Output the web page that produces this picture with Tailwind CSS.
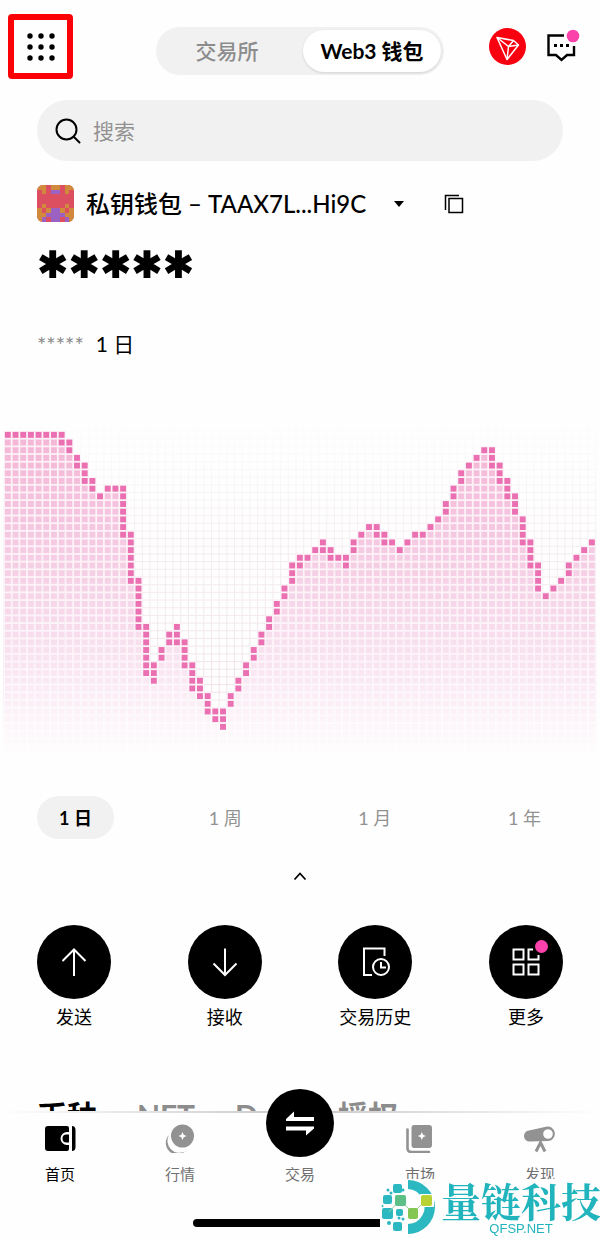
<!DOCTYPE html>
<html lang="zh-CN">
<head>
    <meta charset="UTF-8">
    <meta name="viewport" content="width=device-width, initial-scale=1.0">
    <title>Web3 钱包</title>
    <script src="https://cdn.jsdelivr.net/npm/@tailwindcss/browser@4"></script>
</head>
<body class="bg-[#fefefe] text-black font-['Lato','Noto_Sans_CJK_SC',sans-serif]">

    <div class="min-h-screen pb-24">

        <!-- Top bar -->
        <header class="grid grid-cols-[1fr_288px_1fr] items-center pt-[14px]">
            <div class="pl-2">
                <button aria-label="菜单" class="flex size-[65px] items-center justify-center rounded-sm border-6 border-[#fb0007]">
                    <svg class="size-8" viewBox="0 0 32 32" fill="black">
                        <circle cx="5" cy="5" r="2.7"/><circle cx="16" cy="5" r="2.7"/><circle cx="27" cy="5" r="2.7"/>
                        <circle cx="5" cy="16" r="2.7"/><circle cx="16" cy="16" r="2.7"/><circle cx="27" cy="16" r="2.7"/>
                        <circle cx="5" cy="27" r="2.7"/><circle cx="16" cy="27" r="2.7"/><circle cx="27" cy="27" r="2.7"/>
                    </svg>
                </button>
            </div>
            <div class="mb-1 flex h-12 self-end rounded-full bg-[#f1f1f1] p-[3px]">
                <button class="flex-1 pr-2 text-[21px] font-medium text-[#8c8c8c]">交易所</button>
                <button class="w-[138px] rounded-full bg-white text-[21px] font-bold shadow">Web3 钱包</button>
            </div>
            <div class="flex items-center justify-end gap-5 pr-5">
                <button aria-label="TRON">
                    <svg class="size-[37px]" viewBox="0 0 37 37" fill="none" stroke="white" stroke-width="1.5" stroke-linejoin="round">
                        <circle cx="18.5" cy="18.5" r="18.5" fill="#f8000f" stroke="none"/>
                        <path d="M8 9.500 24.500 12.500 29.500 17 18 31.500Z"/>
                        <path d="M8 9.500 19.500 18.500 24.500 12.500M19.500 18.500 29.500 17M19.500 18.500 18 31.500"/>
                    </svg>
                </button>
                <button aria-label="消息">
                    <svg class="h-9 w-[34px]" viewBox="0 0 34 36" fill="none">
                        <path d="M18 6.500H2.500V26H10L15.500 31 21 26H28V17" stroke="black" stroke-width="2.400"/>
                        <path d="M8 16.500h3M14 16.500h3M20 16.500h3" stroke="black" stroke-width="3"/>
                        <circle cx="27" cy="7" r="6.300" fill="#fb42ab"/>
                    </svg>
                </button>
            </div>
        </header>

        <main>
            <div class="px-[37px]">
                <label class="mt-[21px] flex h-[61px] items-center gap-3 rounded-full bg-[#f1f1f1] px-[18px]">
                    <svg class="size-[26px] shrink-0" viewBox="0 0 26 26" fill="none" stroke="black" stroke-width="2" stroke-linecap="round">
                        <circle cx="11.500" cy="11.500" r="10"/><path d="M19 19l5.500 5.500"/>
                    </svg>
                    <input type="text" placeholder="搜索" aria-label="搜索" class="w-full bg-transparent text-[21px] outline-none placeholder:text-[#929292]">
                </label>

                <!-- Wallet selector -->
                <div class="mt-6 flex h-[37px] items-center">
                    <svg class="mr-3 size-[37px] rounded-md" viewBox="0 0 8 8" fill="#dc4f60" shape-rendering="crispEdges">
                        <path d="M0 0h8v8H0z"/>
                        <path fill="#d18a3c" d="M0 0h2v1H0zM3 0h2v1H3zM6 0h2v1H6zM1 1h1v1H1zM6 1h1v1H6zM1 4h1v1H1zM6 4h1v1H6zM0 5h1v1H0zM2 5h1v1H2zM5 5h1v1H5zM7 5h1v1H7zM0 6h2v1H0zM6 6h2v1H6zM0 7h1v1H0zM7 7h1v1H7z"/>
                        <path fill="#9b62c4" d="M3 1h2v1H3zM3 5h2v1H3zM2 6h4v1H2zM1 7h1v1H1zM3 7h2v1H3zM6 7h1v1H6z"/>
                    </svg>
                    <button class="flex items-center gap-7 text-2xl font-medium whitespace-nowrap">
                        私钥钱包 – TAAX7L...Hi9C
                        <svg class="h-[6px] w-[10px]" viewBox="0 0 10 6"><path d="M0 0h10L5 6z"/></svg>
                    </button>
                    <button aria-label="复制" class="ml-10">
                        <svg class="size-5" viewBox="0 0 20 20" fill="none" stroke="black" stroke-width="1.5">
                            <path d="M5 4.500h13.500V18.500H5zM1.500 16V1.500H15"/>
                        </svg>
                    </button>
                </div>

                <div class="mt-5 h-16 text-[74px] leading-[76px] font-black [-webkit-text-stroke:2px_black]">*****</div>
                <div class="mt-6 flex h-7 items-center gap-3 text-[21px]">
                    <span class="text-[22px] text-[#8c8c8c]">*****</span>
                    <span>1 日</span>
                </div>
            </div>

            <svg id="chart" class="mt-[57px] block w-full" viewBox="0 0 600 345" role="img" aria-label="资产走势">
                <defs>
                    <linearGradient id="area" gradientUnits="userSpaceOnUse" x1="0" y1="15" x2="0" y2="335">
                        <stop offset="0" stop-color="#f4b5d5"/>
                        <stop offset="0.300" stop-color="#f5c6e0"/>
                        <stop offset="0.550" stop-color="#f6d7e9"/>
                        <stop offset="0.750" stop-color="#f9e6f2"/>
                        <stop offset="1" stop-color="#fefcfd"/>
                    </linearGradient>
                    <linearGradient id="grid" gradientUnits="userSpaceOnUse" x1="0" y1="0" x2="0" y2="345">
                        <stop offset="0" stop-color="#f5eff2" stop-opacity="0"/>
                        <stop offset="0.400" stop-color="#f4edf0"/>
                        <stop offset="0.800" stop-color="#f1e4ea"/>
                        <stop offset="1" stop-color="#f5eff2" stop-opacity="0"/>
                    </linearGradient>
                    <linearGradient id="wash" gradientUnits="userSpaceOnUse" x1="0" y1="15" x2="0" y2="335">
                        <stop offset="0" stop-color="#fdf1f7"/>
                        <stop offset="0.700" stop-color="#fdf5fa"/>
                        <stop offset="1" stop-color="#fefefe"/>
                    </linearGradient>
                </defs>
            </svg>

            <div class="px-[37px]">
                <div class="mt-9 flex justify-between text-lg text-[#929292]">
                    <button class="h-[43px] w-[77px] rounded-full bg-[#f1f1f1] font-bold text-black">1 日</button>
                    <button class="h-[43px] w-[77px]">1 周</button>
                    <button class="h-[43px] w-[77px]">1 月</button>
                    <button class="h-[43px] w-[77px]">1 年</button>
                </div>

                <button aria-label="收起" class="mx-auto mt-8 block">
                    <svg class="h-[10px] w-[14px]" viewBox="0 0 14 10" fill="none" stroke="black" stroke-width="1.800"><path d="M1.500 8.500 7 2.500l5.500 6"/></svg>
                </button>

                <!-- Quick actions -->
                <div class="mt-11 flex justify-between text-lg">
                    <button class="flex w-[74px] flex-col items-center gap-1 whitespace-nowrap">
                        <svg class="size-[74px]" viewBox="0 0 74 74" fill="none" stroke="white" stroke-width="2">
                            <circle cx="37" cy="37" r="37" fill="black" stroke="none"/>
                            <path d="M37 51V24.500M25.500 36 37 24.500 48.500 36"/>
                        </svg>
                        发送
                    </button>
                    <button class="flex w-[74px] flex-col items-center gap-1 whitespace-nowrap">
                        <svg class="size-[74px]" viewBox="0 0 74 74" fill="none" stroke="white" stroke-width="2">
                            <circle cx="37" cy="37" r="37" fill="black" stroke="none"/>
                            <path d="M37 23.500V50M25.500 38.500 37 50 48.500 38.500"/>
                        </svg>
                        接收
                    </button>
                    <button class="flex w-[74px] flex-col items-center gap-1 whitespace-nowrap">
                        <svg class="size-[74px]" viewBox="0 0 74 74" fill="none" stroke="white" stroke-width="2">
                            <circle cx="37" cy="37" r="37" fill="black" stroke="none"/>
                            <path d="M34 50H26V23.500H46.500V31"/>
                            <circle cx="43" cy="42" r="8"/>
                            <path d="M43 37V42.500H48"/>
                        </svg>
                        交易历史
                    </button>
                    <button class="flex w-[74px] flex-col items-center gap-1 whitespace-nowrap">
                        <svg class="size-[74px]" viewBox="0 0 74 74" fill="none" stroke="white" stroke-width="2">
                            <circle cx="37" cy="37" r="37" fill="black" stroke="none"/>
                            <path d="M24.500 24.500h10v10h-10zM24.500 39.500h10v10h-10zM39.500 39.500h10v10h-10zM44 24.500h-4.500v10h10V30"/>
                            <circle cx="52.500" cy="21.500" r="6.500" fill="#fb42ab" stroke="none"/>
                        </svg>
                        更多
                    </button>
                </div>

                <div class="mt-16 flex gap-10 text-[30px] leading-10 font-bold text-[#8c8c8c]">
                    <button class="text-black">币种</button>
                    <button>NFT</button>
                    <button>DeFi</button>
                    <button>授权</button>
                </div>
            </div>
        </main>
    </div>

    <!-- Bottom navigation -->
    <nav class="fixed inset-x-0 bottom-0 h-32 bg-[#fefefe]">
        <div class="h-[2px] bg-linear-to-r from-transparent via-[#c8c8c8] to-transparent"></div>
        <div class="grid grid-cols-5 text-[15px] leading-5 text-[#707070]">
            <a href="#" class="flex flex-col items-center gap-[11px] pt-[10px] text-black">
                <svg class="h-[30px] w-8" viewBox="0 0 32 30">
                    <path d="M4 3h19q2 0 2 2v4h-2a6.500 6.500 0 0 0 0 13h2v4q0 2-2 2H4q-3 0-3-3V6q0-3 3-3z"/>
                    <path d="M25 11.500v8h-2.500a4 4 0 0 1 0-8zM28 3q3.500 0 3.500 4v17q0 4-3.500 4z"/>
                </svg>
                首页
            </a>
            <a href="#" class="flex flex-col items-center gap-[11px] pt-[10px]">
                <svg class="h-[30px] w-8" viewBox="0 0 32 30" fill="#929292">
                    <path d="M5 12a12 12 0 0 0 16 16.500A11.500 11.500 0 0 1 5 12z"/>
                    <path fill-rule="evenodd" d="M18.500 1.500a11.500 11.500 0 1 1 0 23 11.500 11.500 0 0 1 0-23zm0 7.500-1.200 2.800-2.800 1.200 2.800 1.200 1.200 2.800 1.200-2.800 2.800-1.200-2.800-1.200z"/>
                </svg>
                行情
            </a>
            <a href="#" class="flex flex-col items-center gap-[11px] pt-[10px]">
                <span class="relative h-[30px] w-[68px]">
                    <svg class="absolute -bottom-1 left-0 size-[68px]" viewBox="0 0 68 68">
                        <circle cx="34" cy="34" r="34"/>
                        <path fill="white" d="M20 32v-2l8-7.500V28h20v4zM20 37.500h28v2l-8 7V41.500H20z"/>
                    </svg>
                </span>
                交易
            </a>
            <a href="#" class="flex flex-col items-center gap-[11px] pt-[10px]">
                <svg class="h-[30px] w-8" viewBox="0 0 32 30" fill="#929292">
                    <path fill-rule="evenodd" d="M10 2h15q3 0 3 3v17q0 3-3 3H10q-2.500 0-2.500-3V5q0-3 2.500-3zm7.800 7-1.200 2.800-2.800 1.200 2.800 1.200 1.200 2.800 1.200-2.800 2.800-1.200-2.800-1.200z"/>
                    <path d="M3.500 6.500V25q0 4 4 4H25" fill="none" stroke="#929292" stroke-width="2.600" stroke-linecap="round"/>
                </svg>
                市场
            </a>
            <a href="#" class="flex flex-col items-center gap-[11px] pt-[10px]">
                <svg class="h-[30px] w-8" viewBox="0 0 32 30" fill="#929292">
                    <path fill-rule="evenodd" d="M5 7.500 22 3.800a7.200 7.200 0 1 1 2 14.200L6 18.500a5.500 5.500 0 0 1-1-11zM24 6.200a4.800 4.800 0 1 0 0 9.600 4.800 4.800 0 0 0 0-9.600z"/>
                    <path d="M12 28.500l4.500-9 4.500 9" fill="none" stroke="#929292" stroke-width="3"/>
                </svg>
                发现
            </a>
        </div>
        <div class="absolute bottom-3 left-1/2 h-2 w-[214px] -translate-x-1/2 rounded-full bg-black"></div>
        <div class="absolute right-0 bottom-0 flex h-[60px] w-[220px] gap-1 bg-[#fefefe] pl-px">
            <svg class="size-14 shrink-0" viewBox="0 0 56 56" fill="#2bb8c0">
                <path d="M27 1a27 27 0 0 1 0 54V45a17 17 0 0 0 14-26 17 17 0 0 0-14-9z"/>
                <path d="M39 15h14v13H39z" fill="#fefefe"/>
                <rect x="12" y="5" width="9" height="9" rx="2"/>
                <rect x="2" y="16" width="9" height="9" rx="2"/>
                <rect x="1" y="29" width="11" height="11" rx="2"/>
                <rect x="12" y="43" width="9" height="9" rx="2"/>
                <rect x="15" y="30" width="7" height="7" rx="2"/>
                <circle cx="7" cy="11" r="1.500"/><circle cx="22" cy="11" r="1.500"/><circle cx="1.500" cy="27" r="1"/>
                <circle cx="18" cy="39" r="1.500"/><circle cx="22" cy="40" r="1.500"/><circle cx="8" cy="44" r="2"/><circle cx="10" cy="14" r="1.500"/>
                <path d="M19 21 32 34 45 21M19 21 8 33" fill="none" stroke="#9ccf9a" stroke-width="1"/>
                <rect x="14" y="16" width="11" height="11" rx="2" fill="#5cbf86"/>
                <rect x="27" y="29" width="10" height="11" rx="2" fill="#84c653"/>
                <rect x="40" y="16" width="11" height="11" rx="2" fill="#b8d233"/>
            </svg>
            <div class="flex-1 text-center text-[#22b4bc]">
                <div class="font-['Noto_Serif_CJK_SC','Noto_Sans_CJK_SC',serif] text-[40px] leading-[42px] font-bold whitespace-nowrap">量链科技</div>
                <div class="font-['Liberation_Sans',sans-serif] text-[13px] leading-4">QFSP.NET</div>
            </div>
        </div>
    </nav>

    <script>
        // first and last filled row of the line, one pair per column
        const line = [
            [0,0],[0,0],[0,0],[0,0],[0,0],[0,0],[0,0],[0,1],[1,2],[3,4],[4,6],[6,7],[8,8],[7,7],[7,7],[7,13],
            [13,19],[19,25],[25,31],[30,32],[28,29],[26,27],[25,27],[27,30],[30,33],[32,34],[34,36],[36,37],
            [36,38],[34,35],[32,33],[30,31],[28,29],[26,27],[24,25],[22,23],[20,21],[17,19],[16,17],[16,16],
            [15,15],[14,15],[15,16],[16,16],[16,17],[14,15],[13,13],[12,12],[12,13],[13,14],[14,14],[15,15],
            [14,14],[13,13],[13,13],[12,12],[11,11],[9,10],[7,8],[5,6],[4,4],[3,3],[2,2],[2,4],[4,6],[6,8],
            [8,10],[11,14],[14,17],[17,20],[21,21],[20,20],[19,19],[17,18],[16,16],[15,15],[14,14]
        ];
        const pitch = 584 / 76;
        const rows = 42;
        let shapes = '';

        function rect(x, y, w, h, fill) {
            shapes += `<rect x="${x}" y="${y}" width="${w}" height="${h}" fill="${fill}"/>`;
        }

        for (let i = 0; i <= 77; i++) {
            rect(4 + i * pitch - 0.5, 0, 1, 340, 'url(#grid)');
        }
        for (let r = -1; r <= rows; r++) {
            rect(4, 16 + r * pitch - 0.5, 592, 1, 'url(#grid)');
        }
        line.forEach(([top, bottom], i) => {
            const x = 4 + i * pitch;
            rect(x, 16 + top * pitch, pitch, (rows - top) * pitch, 'url(#wash)');
            for (let r = top; r < rows; r++) {
                rect(x + 0.9, 16 + r * pitch + 0.9, 5.9, 5.9, r <= bottom ? '#ea70b2' : 'url(#area)');
            }
        });
        document.getElementById('chart').innerHTML += shapes;
    </script>
</body>
</html>
